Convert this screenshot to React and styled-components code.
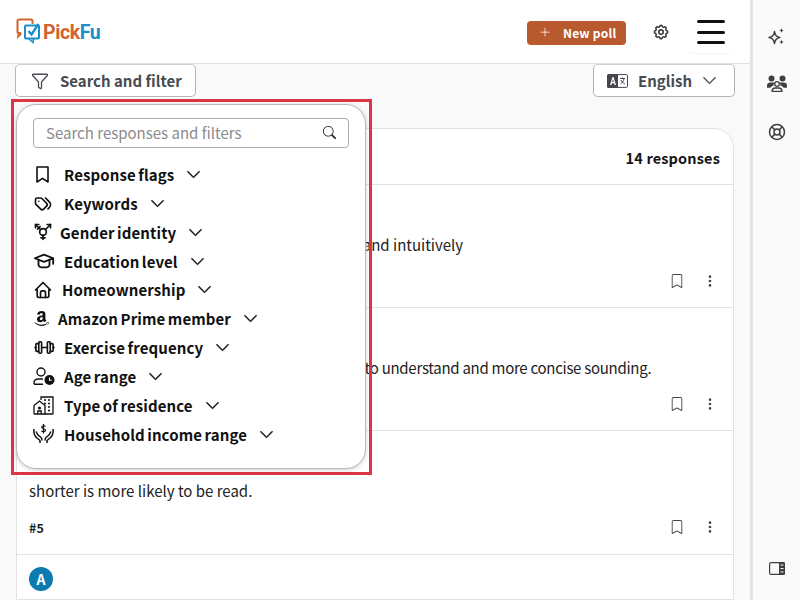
import React from "react";
import styled, { createGlobalStyle } from "styled-components";
import { BsChevronDown, BsSearch, BsThreeDotsVertical, BsBookmark, BsPlusLg } from "react-icons/bs";
import { FaAmazon } from "react-icons/fa";
import { TbBarbell, TbTags, TbGenderTransgender, TbSchool, TbHome, TbSettings } from "react-icons/tb";
import { Funnel, LifeBuoy } from "lucide-react";

const GlobalStyle = createGlobalStyle`
  html, body {
    margin: 0;
    height: 100%;
    overflow: hidden;
    background: #f9f9f9;
    font-family: "Noto Sans CJK JP", "Noto Sans", sans-serif;
    color: #1a1a1a;
  }
  * { box-sizing: border-box; }
`;

const Page = styled.div`
  display: flex;
  width: 800px;
  height: 600px;
  overflow: hidden;
`;

const Main = styled.div`
  position: relative;
  width: 750px;
  flex-shrink: 0;
  display: flex;
  flex-direction: column;
`;

const Header = styled.header`
  height: 64px;
  flex-shrink: 0;
  background: #fff;
  border-bottom: 1px solid #dedede;
  display: flex;
  align-items: flex-start;
  justify-content: space-between;
  padding: 18px 0 0 16px;
`;

const LogoLink = styled.div`
  display: flex;
  align-items: center;
  height: 27px;
`;

const LogoWord = styled.span`
  font-family: "Roboto", sans-serif;
  font-size: 19.5px;
  font-weight: 700;
  letter-spacing: -0.4px;
  line-height: 27px;
  margin-top: 1px;
  color: ${(p) => p.$color};
`;

const HeaderActions = styled.div`
  display: flex;
  align-items: flex-start;
`;

const NewPoll = styled.button`
  width: 99px;
  height: 24px;
  margin-top: 3px;
  border: none;
  border-radius: 4px;
  background: #b85a2e;
  color: #fff;
  font: inherit;
  font-size: 12px;
  font-weight: 700;
  letter-spacing: 0.2px;
  display: flex;
  align-items: center;
  gap: 12px;
  padding: 0 0 2px 12px;
`;

const GearButton = styled.div`
  margin: 5px 0 0 26px;
  height: 18px;
  color: #333;
  display: flex;
`;

const Burger = styled.div`
  width: 45px;
  height: 35px;
  margin: 0 17px 0 18px;
  padding: 2px 8px 0 9px;
  border-radius: 0 0 5px 5px;
  box-shadow: 0 1px 1px rgba(0, 0, 0, 0.05);
  display: flex;
  flex-direction: column;
  gap: 7.5px;
`;

const BurgerBar = styled.span`
  display: block;
  height: 3px;
  border-radius: 2px;
  background: #111;
`;

const Toolbar = styled.div`
  display: flex;
  justify-content: space-between;
  padding: 0 15px;
  flex-shrink: 0;
`;

const ToolButton = styled.button`
  width: ${(p) => p.$width}px;
  height: 33px;
  border: 1px solid #b5b5b5;
  border-top-color: #cfcfcf;
  border-radius: 5px;
  background: #fff;
  color: #484b52;
  font: inherit;
  font-size: 15px;
  font-weight: 700;
  display: flex;
  align-items: center;
  gap: ${(p) => p.$gap}px;
  padding: 0 0 0 ${(p) => p.$pad}px;
`;

const Card = styled.section`
  margin: 31px 16px 0 16px;
  background: #fff;
  border: 1px solid #e2e2e2;
  border-radius: 20px 20px 0 0;
  flex: 1;
  overflow: hidden;
`;

const CardHead = styled.div`
  height: 56px;
  border-bottom: 1px solid #e2e2e2;
  display: flex;
  align-items: center;
  justify-content: flex-end;
  padding: 1px 13px 0 0;
  font-size: 14.5px;
  font-weight: 700;
  letter-spacing: 0.15px;
  color: #151515;
`;

const Response = styled.div`
  height: ${(p) => p.$height}px;
  border-bottom: 1px solid #e2e2e2;
  padding: 12px 16px 0 12px;
  display: flex;
  flex-direction: column;
`;

const Avatar = styled.div`
  width: 24px;
  height: 24px;
  border-radius: 50%;
  background: #0b7bb0;
  color: #fff;
  font-size: 14px;
  font-weight: 700;
  display: flex;
  align-items: center;
  justify-content: center;
`;

const Answer = styled.div`
  margin-top: 12px;
  height: 24px;
  line-height: 24px;
  font-size: 15px;
  letter-spacing: ${(p) => p.$tracking || 0}px;
  color: #222;
  white-space: nowrap;
`;

const ResponseFoot = styled.div`
  margin-top: 12px;
  height: 24px;
  display: flex;
  align-items: center;
  font-size: 12.5px;
  font-weight: 700;
  color: #222;
`;

const ResponseNumber = styled.span`
  flex: 1;
`;

const FootIcon = styled.span`
  display: flex;
  color: #444;
  font-size: 14px;
  margin-left: ${(p) => p.$gap || 0}px;
`;

const RightRail = styled.aside`
  flex: 1;
  background: #fafafa;
  border-left: 3px solid #e3e3e3;
  display: flex;
  flex-direction: column;
  align-items: center;
  padding: 26px 0 0 0;
`;

const RailIcon = styled.div`
  height: 20px;
  margin-bottom: ${(p) => p.$after || 0}px;
  color: #3f3f3f;
  display: flex;
  align-items: center;
`;

const Highlight = styled.div`
  position: absolute;
  left: 11px;
  top: 99px;
  width: 361px;
  height: 376px;
  border: 3px solid #dc3545;
  padding: 2px 3px 3px 2px;
`;

const Popover = styled.div`
  height: 100%;
  background: #fff;
  border: 1px solid #b9b9b9;
  border-radius: 20px;
  box-shadow: 0 1px 4px rgba(0, 0, 0, 0.18);
  padding: 13px 16px 0;
`;

const SearchBox = styled.div`
  height: 30px;
  border: 1px solid #adadad;
  border-radius: 4px;
  display: flex;
  align-items: center;
  justify-content: space-between;
  padding: 0 12px 1px 12px;
  color: #8a8a8a;
  font-size: 15px;
  margin-bottom: 12.4px;
`;

const SearchIcon = styled.span`
  display: flex;
  color: #222;
  font-size: 13px;
`;

const FilterList = styled.div`
  display: flex;
  flex-direction: column;
`;

const FilterRow = styled.div`
  height: 28.9px;
  padding-bottom: 1px;
  display: flex;
  align-items: center;
  font-size: 15px;
  font-weight: 700;
  letter-spacing: 0.1px;
  word-spacing: -1px;
  color: #111;
  white-space: nowrap;
`;

const FilterIcon = styled.span`
  width: ${(p) => p.$width}px;
  flex-shrink: 0;
  display: flex;
  align-items: center;
  color: #111;
  padding-left: ${(p) => p.$inset || 0}px;
`;

const Chevron = styled.span`
  display: flex;
  margin-left: 12px;
  color: #111;
`;

const LogoMark = () => (
  <svg width="27" height="27" viewBox="0 0 27 27" fill="none">
    <path d="M5 15H2.500a1 1 0 0 1-1-1V3a1.500 1.500 0 0 1 1.500-1.500H15a1.500 1.500 0 0 1 1.500 1.500v3" stroke="#d2632c" strokeWidth="2" />
    <path d="M2.500 15.500 2 19l3.500-3.500" stroke="#d2632c" strokeWidth="1.600" />
    <rect x="9" y="7.500" width="14" height="13" rx="1" stroke="#1b8fca" strokeWidth="2" />
    <path d="M13 21 17 24.500 17.500 21" stroke="#1b8fca" strokeWidth="1.600" />
    <path d="M12.500 13 15.500 16.500 22.500 6" stroke="#1b8fca" strokeWidth="2.400" />
  </svg>
);

const LanguageIcon = () => (
  <svg width="21" height="14" viewBox="0 0 21 14">
    <path d="M1.500 0H11v14H1.500A1.500 1.500 0 0 1 0 12.500v-11A1.500 1.500 0 0 1 1.500 0Z" fill="#45474d" />
    <path d="M3 11 5.500 3h1L9 11H7.600L7.100 9.200H4.900L4.400 11ZM5.200 8h1.600L6 5Z" fill="#fff" />
    <path d="M11 .6h8.500a1 1 0 0 1 1 1v10.800a1 1 0 0 1-1 1H11" fill="none" stroke="#45474d" />
    <path d="M13 4.500h5M15.500 3.500v1M17 4.500c-.5 3-2 4.500-3.500 5.500M14 6c.8 2 2 3 3.800 3.800" fill="none" stroke="#45474d" />
  </svg>
);

const BookmarkIcon = () => (
  <svg width="13" height="17" viewBox="0 0 13 17" fill="none" stroke="#111" strokeWidth="1.600">
    <path d="M1 1h11v15l-5.500-3.600L1 16Z" strokeLinejoin="round" />
  </svg>
);

const AgeIcon = () => (
  <svg width="22" height="19" viewBox="0 0 22 19" fill="none" stroke="#111" strokeWidth="1.400">
    <circle cx="8" cy="5" r="4" />
    <path d="M1 17v-1c0-2.500 2-4 4.500-4H10M1 17.300h9" />
    <circle cx="16.500" cy="13" r="5" fill="#111" stroke="none" />
    <path d="M16.500 10.500V13.300h2.200" stroke="#fff" strokeWidth="1.100" />
  </svg>
);

const ResidenceIcon = () => (
  <svg width="21" height="19" viewBox="0 0 21 19" fill="none" stroke="#111" strokeWidth="1.300">
    <path d="M1 9.500 6.500 5 12 9.500V18H1.500a.5.5 0 0 1-.5-.5Z" />
    <circle cx="6.500" cy="12" r="1.600" fill="#111" stroke="none" />
    <path d="M4.800 18v-3h3.400v3" />
    <path d="M8 4V1h12v16.500a.5.5 0 0 1-.5.5H12" />
    <path d="M11 4h2M15 4h2M11 7.500h2M15 7.500h2M15 11h2M15 14.500h2" strokeWidth="1.500" />
  </svg>
);

const IncomeIcon = () => (
  <svg width="21" height="20" viewBox="0 0 21 20" fill="none" stroke="#111" strokeWidth="1.500">
    <path d="M1 5c-.5 4 .5 7 3 9l3 2.500V19" />
    <path d="M20 5c.5 4-.5 7-3 9l-3 2.500V19" />
    <path d="M3 7.500 5 11l3 2.500c1 1 1 2 1 3" />
    <path d="M18 7.500 16 11l-3 2.500c-1 1-1 2-1 3" />
    <path d="M12.500 2.500c-.5-1-3.500-1.200-3.800.5-.3 2 4 1.500 3.800 3.500-.2 1.700-3.500 1.500-4 .3M10.500 0v9.500" strokeWidth="1.200" />
  </svg>
);

const SparkleIcon = () => (
  <svg width="17" height="17" viewBox="0 0 17 17" fill="none" stroke="#3f3f3f" strokeWidth="1.500">
    <path d="M6.500 3.500C7 7 8 9 11.800 9.500 8 10 7 12 6.500 15.500 6 12 5 10 1 9.500 5 9 6 7 6.500 3.500Z" strokeLinejoin="round" />
    <path d="M13.500 0c.2 1.700.8 2.300 2.500 2.500-1.700.2-2.300.8-2.500 2.500-.2-1.700-.8-2.300-2.500-2.500 1.700-.2 2.300-.8 2.500-2.500ZM13.500 11.500c.2 1.700.8 2.300 2.500 2.500-1.700.2-2.300.8-2.500 2.500-.2-1.700-.8-2.300-2.500-2.500 1.700-.2 2.300-.8 2.500-2.500Z" fill="#3f3f3f" stroke="none" />
  </svg>
);

const PeopleIcon = () => (
  <svg width="20" height="17" viewBox="0 0 20 17" fill="#3f3f3f">
    <circle cx="4.500" cy="3.500" r="3" />
    <circle cx="15.500" cy="3.500" r="3" />
    <path d="M0 10.500C0 8.500 1.500 7.500 3.500 7.500h3c.5 0 1 .1 1.300.3-1 .8-1.500 1.800-1.300 3-1.500.3-2.500 1-3 2H0ZM20 10.500c0-2-1.500-3-3.500-3h-3c-.5 0-1 .1-1.300.3 1 .8 1.500 1.800 1.300 3 1.500.3 2.500 1 3 2H20Z" />
    <circle cx="10" cy="9" r="2.300" fill="#fafafa" stroke="#3f3f3f" strokeWidth="1.300" />
    <path d="M5 16.500c0-2.500 1.500-3.500 3.500-3.500h3c2 0 3.500 1 3.500 3.500Z" fill="#fafafa" stroke="#3f3f3f" strokeWidth="1.300" />
  </svg>
);

const PanelIcon = () => (
  <svg width="16" height="13" viewBox="0 0 16 13">
    <rect x="0.600" y="0.600" width="14.800" height="11.800" rx="1.500" fill="none" stroke="#3f3f3f" strokeWidth="1.200" />
    <path d="M10 0h4.500A1.500 1.500 0 0 1 16 1.500v10a1.500 1.500 0 0 1-1.500 1.500H10Z" fill="#3f3f3f" />
    <path d="M11.500 3h3M11.500 6.500h3M11.500 10h3" stroke="#fafafa" strokeWidth="1.200" />
  </svg>
);

const filters = [
  { label: "Response flags", width: 31, inset: 3, icon: <BookmarkIcon /> },
  { label: "Keywords", width: 31, inset: 0, icon: <TbTags size={20} /> },
  { label: "Gender identity", width: 27, inset: 0, icon: <TbGenderTransgender size={20} /> },
  { label: "Education level", width: 31, inset: 0, icon: <TbSchool size={22} /> },
  { label: "Homeownership", width: 29, inset: 0, icon: <TbHome size={20} /> },
  { label: "Amazon Prime member", width: 25, inset: 0, icon: <FaAmazon size={17} /> },
  { label: "Exercise frequency", width: 31, inset: 0, icon: <TbBarbell size={23} strokeWidth={1.7} /> },
  { label: "Age range", width: 31, inset: 0, icon: <AgeIcon /> },
  { label: "Type of residence", width: 31, inset: 0, icon: <ResidenceIcon /> },
  { label: "Household income range", width: 31, inset: 0, icon: <IncomeIcon /> },
];

const responses = [
  { id: 3, height: 123, text: "I chose this one because it reads more naturally and intuitively" },
  { id: 4, height: 123, tracking: -0.28, text: "This one reads more fluently and I find it far easier to understand and more concise sounding." },
  { id: 5, height: 124, text: "shorter is more likely to be read." },
];

const App = () => (
  <Page>
    <GlobalStyle />
    <Main>
      <Header>
        <LogoLink>
          <LogoMark />
          <LogoWord $color="#d2632c">Pick</LogoWord>
          <LogoWord $color="#1b8fca">Fu</LogoWord>
        </LogoLink>
        <HeaderActions>
          <NewPoll>
            <BsPlusLg size={12} />
            New poll
          </NewPoll>
          <GearButton>
            <TbSettings size={18} />
          </GearButton>
          <Burger>
            <BurgerBar />
            <BurgerBar />
            <BurgerBar />
          </Burger>
        </HeaderActions>
      </Header>
      <Toolbar>
        <ToolButton $width={181} $pad={15} $gap={11}>
          <Funnel size={18} strokeWidth={1.7} />
          Search and filter
        </ToolButton>
        <ToolButton $width={142} $pad={13} $gap={10}>
          <LanguageIcon />
          English
          <BsChevronDown size={15} stroke="currentColor" strokeWidth={0.5} />
        </ToolButton>
      </Toolbar>
      <Card>
        <CardHead>14 responses</CardHead>
        {responses.map((r) => (
          <Response key={r.id} $height={r.height}>
            <Avatar>A</Avatar>
            <Answer $tracking={r.tracking}>{r.text}</Answer>
            <ResponseFoot>
              <ResponseNumber>#{r.id}</ResponseNumber>
              <FootIcon>
                <BsBookmark />
              </FootIcon>
              <FootIcon $gap={19}>
                <BsThreeDotsVertical />
              </FootIcon>
            </ResponseFoot>
          </Response>
        ))}
        <Response $height={60}>
          <Avatar>A</Avatar>
        </Response>
      </Card>
      <Highlight>
        <Popover>
          <SearchBox>
            Search responses and filters
            <SearchIcon>
              <BsSearch />
            </SearchIcon>
          </SearchBox>
          <FilterList>
            {filters.map((f) => (
              <FilterRow key={f.label}>
                <FilterIcon $width={f.width} $inset={f.inset}>
                  {f.icon}
                </FilterIcon>
                {f.label}
                <Chevron>
                  <BsChevronDown size={15} stroke="currentColor" strokeWidth={0.6} />
                </Chevron>
              </FilterRow>
            ))}
          </FilterList>
        </Popover>
      </Highlight>
    </Main>
    <RightRail>
      <RailIcon $after={27}>
        <SparkleIcon />
      </RailIcon>
      <RailIcon $after={29}>
        <PeopleIcon />
      </RailIcon>
      <RailIcon $after={416}>
        <LifeBuoy size={18} strokeWidth={2} />
      </RailIcon>
      <RailIcon>
        <PanelIcon />
      </RailIcon>
    </RightRail>
  </Page>
);

export default App;
